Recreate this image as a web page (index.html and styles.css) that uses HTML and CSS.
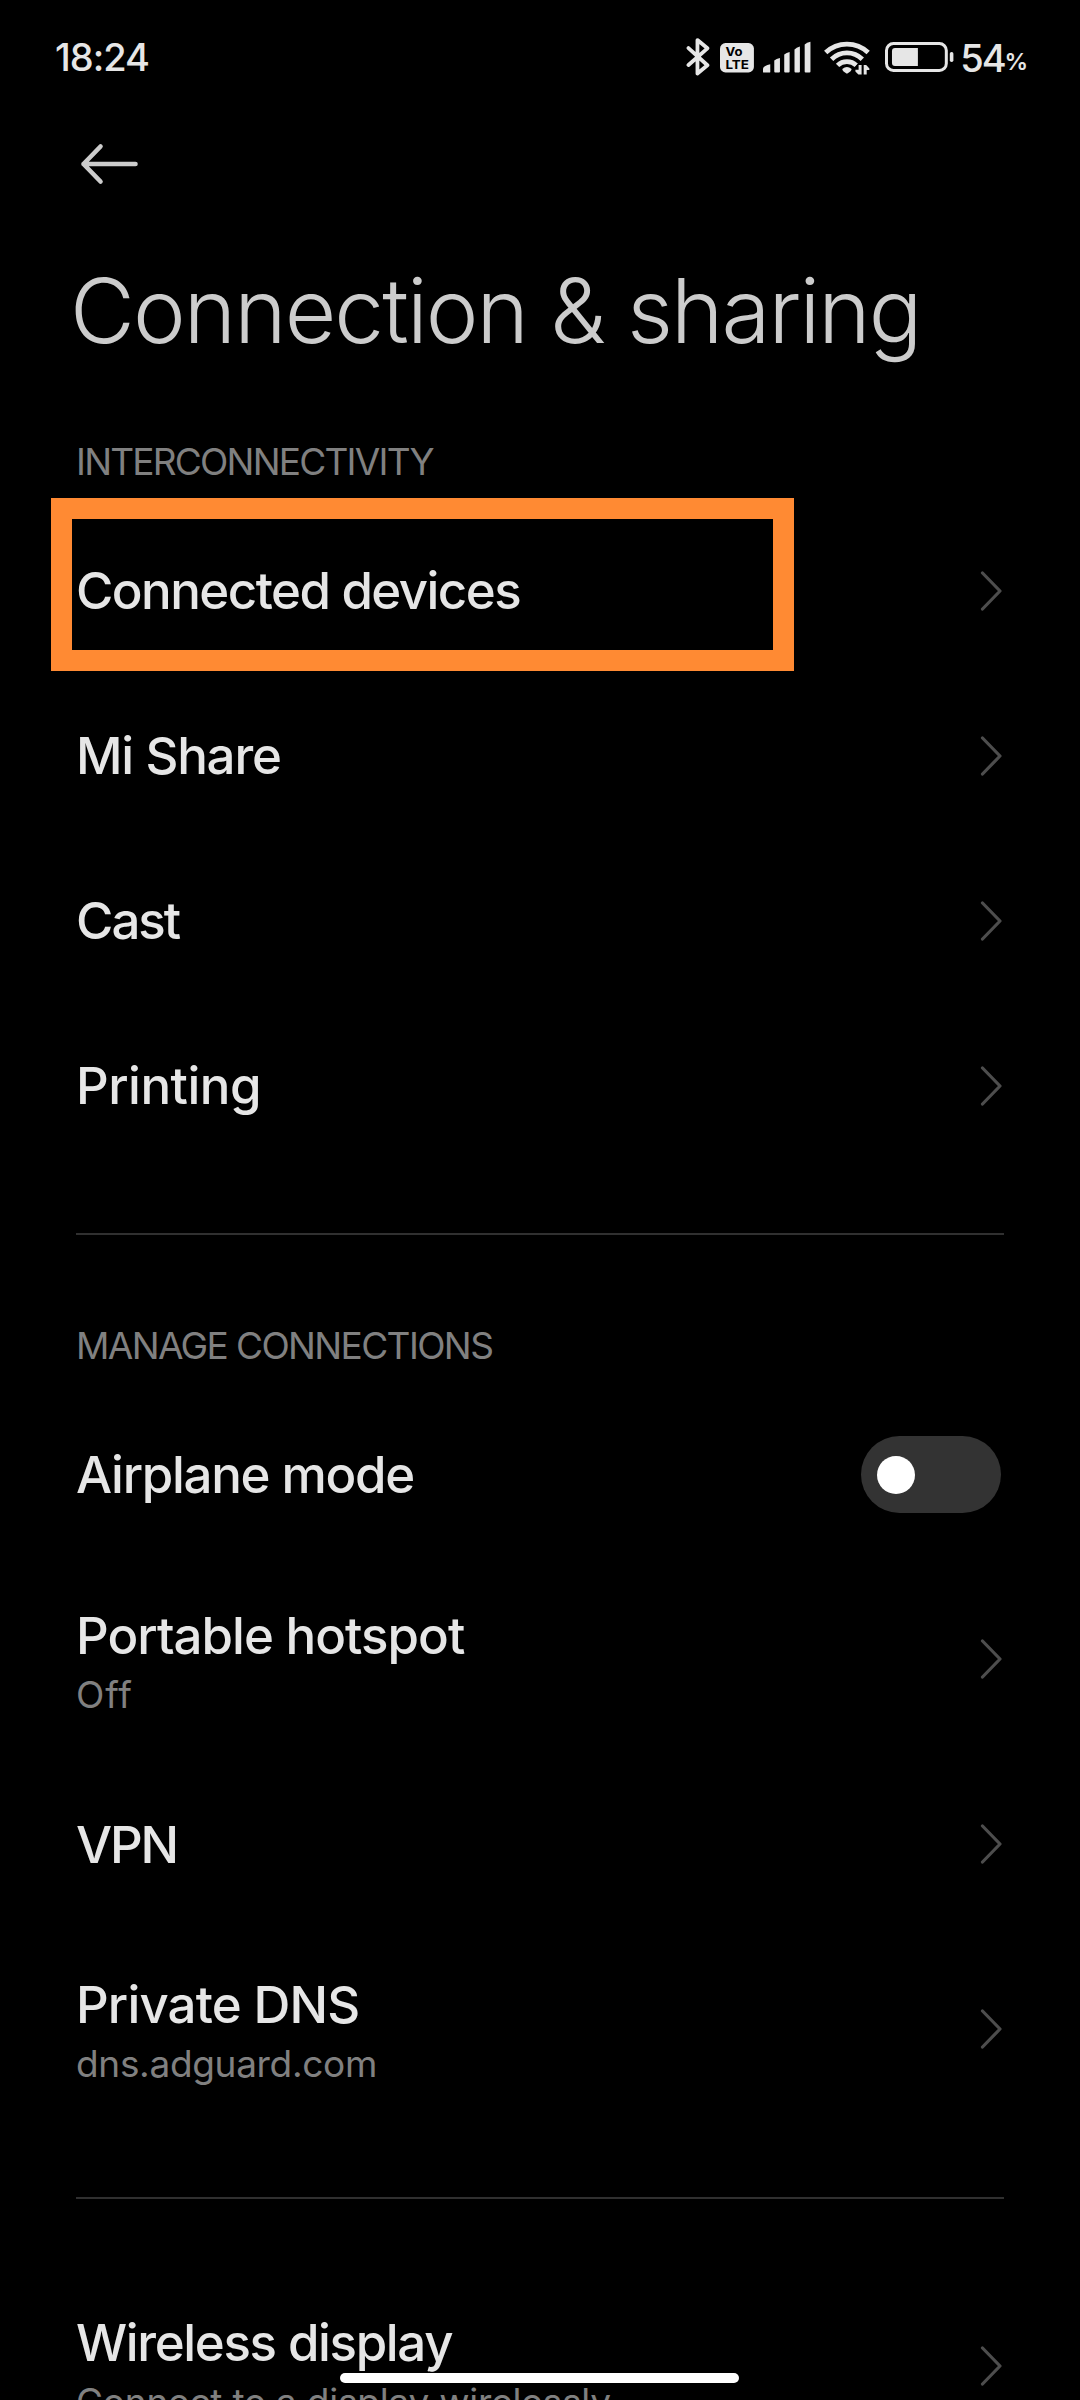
FILE: index.html
```html
<!DOCTYPE html>
<html lang="en">
<head>
<meta charset="utf-8">
<title>Connection &amp; sharing</title>
<link rel="stylesheet" href="styles.css">
</head>
<body>
<div class="screen">
  <header class="status">
    <span class="status__time">18:24</span>
    <div class="status__icons">
      <svg class="icon-bt" width="26" height="40" viewBox="0 0 26 40"><path d="M4.500 11 L23.500 28.300 L13.500 36.500 V3 L23.500 11.300 L4.500 28" fill="none" stroke="#e6e6e6" stroke-width="3.800" stroke-linejoin="round" stroke-linecap="round"/></svg>
      <svg class="icon-volte" width="34" height="30" viewBox="0 0 34 30"><rect width="34" height="29.500" rx="5.500" fill="#e6e6e6"/><text class="volte-text" x="5.500" y="13.200" textLength="17" lengthAdjust="spacingAndGlyphs">Vo</text><text class="volte-text" x="5.500" y="25.600" textLength="23.500" lengthAdjust="spacingAndGlyphs">LTE</text></svg>
      <svg class="icon-signal" width="48" height="32" viewBox="0 0 48 32"><g fill="#e6e6e6"><path d="M0 31 V27.500 Q1 24.500 7.300 23.300 V31 Q7.300 31.500 6.500 31.500 H.8 Q0 31.500 0 31Z"/><path d="M11.300 19.500 Q13.300 17.800 17 17 V30.500 Q17 31.500 16 31.500 H12.300 Q11.300 31.500 11.300 30.500Z"/><path d="M21.300 13.500 Q23.500 11.800 26.700 11 V30.500 Q26.700 31.500 25.700 31.500 H22.300 Q21.300 31.500 21.300 30.500Z"/><path d="M31.600 8.500 Q33.500 6.600 37 5.500 V30.500 Q37 31.500 36 31.500 H32.600 Q31.600 31.500 31.600 30.500Z"/><path d="M41.800 3.500 Q44 1.500 47.600 .8 V30.500 Q47.600 31.500 46.600 31.500 H42.800 Q41.800 31.500 41.800 30.500Z"/></g></svg>
      <svg class="icon-wifi" width="46" height="36" viewBox="0 0 46 36"><g fill="none" stroke="#e6e6e6" stroke-width="4.800"><path d="M1.700 12.500 A31 31 0 0 1 44.300 12.500"/><path d="M7.600 19.200 A22 22 0 0 1 38.400 19.200"/><path d="M13.600 25.400 A13.600 13.600 0 0 1 32.400 25.400"/></g><path d="M18.300 29 Q23 25 27.700 29 Q27.400 31.500 23 33.700 Q18.600 31.500 18.300 29Z" fill="#e6e6e6"/><path d="M33.500 24 H46 V36 H30.500 V28Z" fill="#000"/><path d="M37.700 25 V34.500 H34.500 L31.500 31.500 V29.800 H34.700 V25Z M39.800 34.500 V25 H42.300 L45.500 28.500 V30 H42.800 V34.500Z" fill="#e6e6e6"/></svg>
      <svg class="icon-battery" width="70" height="30" viewBox="0 0 70 30"><rect x="1.500" y="1.500" width="60" height="27" rx="7" fill="none" stroke="#e6e6e6" stroke-width="3"/><path d="M10 6 H33 V24 H10 Q7 24 7 21 V9 Q7 6 10 6Z" fill="#e6e6e6"/><rect x="65" y="10" width="3.600" height="10" rx="1.700" fill="#e6e6e6"/></svg>
      <span class="status__level">54</span><span class="status__percent">%</span>
    </div>
  </header>

  <nav class="toolbar">
    <svg width="60" height="42" viewBox="0 0 60 42"><path d="M21.500 3.500 L4.500 21 L21.500 38.500 M4.500 21 H56.500" fill="none" stroke="#ccc" stroke-width="4.600" stroke-linecap="round" stroke-linejoin="round"/></svg>
  </nav>
  <h1 class="title">Connection &amp; sharing</h1>

  <section class="group">
    <h2 class="label label--inter">INTERCONNECTIVITY</h2>
    <div class="item item--connected"><div class="item__text"><div class="item__title">Connected devices</div></div><svg class="chevron" viewBox="0 0 22 40"><path d="M2.500 2 L20 20 L2.500 38"/></svg><div class="highlight"></div></div>
    <div class="item item--share"><div class="item__text"><div class="item__title">Mi Share</div></div><svg class="chevron" viewBox="0 0 22 40"><path d="M2.500 2 L20 20 L2.500 38"/></svg></div>
    <div class="item item--cast"><div class="item__text"><div class="item__title">Cast</div></div><svg class="chevron" viewBox="0 0 22 40"><path d="M2.500 2 L20 20 L2.500 38"/></svg></div>
    <div class="item item--print"><div class="item__text"><div class="item__title">Printing</div></div><svg class="chevron" viewBox="0 0 22 40"><path d="M2.500 2 L20 20 L2.500 38"/></svg></div>
  </section>

  <section class="group group--divided">
    <h2 class="label label--manage">MANAGE CONNECTIONS</h2>
    <div class="item item--airplane"><div class="item__text"><div class="item__title">Airplane mode</div></div><div class="toggle"><div class="toggle__knob"></div></div></div>
    <div class="item item--double item--hotspot"><div class="item__text"><div class="item__title">Portable hotspot</div><div class="item__note">Off</div></div><svg class="chevron" viewBox="0 0 22 40"><path d="M2.500 2 L20 20 L2.500 38"/></svg></div>
    <div class="item item--vpn"><div class="item__text"><div class="item__title">VPN</div></div><svg class="chevron" viewBox="0 0 22 40"><path d="M2.500 2 L20 20 L2.500 38"/></svg></div>
    <div class="item item--double item--dns"><div class="item__text"><div class="item__title">Private DNS</div><div class="item__note">dns.adguard.com</div></div><svg class="chevron" viewBox="0 0 22 40"><path d="M2.500 2 L20 20 L2.500 38"/></svg></div>
  </section>

  <section class="group group--last">
    <div class="item item--double item--wireless"><div class="item__text"><div class="item__title">Wireless display</div><div class="item__note">Connect to a display wirelessly</div></div><svg class="chevron" viewBox="0 0 22 40"><path d="M2.500 2 L20 20 L2.500 38"/></svg></div>
  </section>
  <div class="home-bar"></div>
</div>
</body>
</html>
```
FILE: styles.css
```css
* { box-sizing: border-box; }

html,
body {
  margin: 0;
  background: #000;
}

.screen {
  position: relative;
  width: 1080px;
  height: 2400px;
  overflow: hidden;
  background: #000;
  color: #e6e6e6;
  font-family: Inter, "Noto Sans", sans-serif;
}

/* Status bar */
.status {
  display: flex;
  justify-content: space-between;
  align-items: center;
  height: 114px;
  padding: 0 53px 0 55px;
  font-weight: 500;
  font-size: 38px;
  line-height: 46px;
}

.status__time { letter-spacing: -1px; }

.status__icons {
  display: flex;
  align-items: center;
  width: 343px;
}

.icon-bt { margin: 0 10px 1px 0; }
.icon-volte { margin: 1px 9px 0 0; }
.icon-signal { margin: 0 13px 0 0; }
.icon-wifi { margin: 1px 15px 0 0; }
.icon-battery { margin-right: 6px; }

.volte-text {
  font: 700 12px Inter, sans-serif;
  fill: #000;
}

.status__level {
  padding-top: 1px;
  font-size: 38px;
  letter-spacing: -2.2px;
}

.status__percent {
  padding-top: 10px;
  font-size: 23.5px;
  font-weight: 600;
  letter-spacing: -1px;
}

/* Heading */
.toolbar {
  display: flex;
  align-items: center;
  height: 100px;
  padding-left: 79px;
}

.title {
  margin: 0;
  padding: 47px 0 0 70px;
  height: 217px;
  font-weight: 300;
  font-size: 89px;
  line-height: 100px;
  letter-spacing: -1.9px;
  color: #ccc;
}

/* Setting groups */
.group { margin: 0 76px; }

.label {
  display: flex;
  align-items: center;
  height: 77px;
  margin: 0;
  padding-bottom: 16px;
  font-weight: 400;
  font-size: 37px;
  line-height: 45px;
  color: #808080;
}

.label--inter { letter-spacing: -1.78px; }
.label--manage { letter-spacing: -1.62px; }

.group--divided {
  margin-top: 65px;
  border-top: 2px solid #303030;
  border-bottom: 2px solid #303030;
  padding: 80px 0 66px;
}

.group--last { padding-top: 65px; }

.item {
  position: relative;
  display: flex;
  justify-content: space-between;
  align-items: center;
  height: 165px;
}

.item__title {
  font-weight: 500;
  font-size: 51px;
  line-height: 62px;
  white-space: nowrap;
}

.item__note {
  font-size: 37px;
  line-height: 55px;
  color: #808080;
  white-space: nowrap;
}

.item--double { height: 204.5px; }
.item--double .item__text { padding-top: 8px; }
.item--vpn .item__text { padding-top: 2px; }

.item--connected .item__title { letter-spacing: -1.55px; }
.item--share .item__title { letter-spacing: -1.2px; }
.item--cast .item__title { letter-spacing: -2px; }
.item--print .item__title { letter-spacing: -0.5px; }
.item--airplane .item__title { letter-spacing: -1.29px; }
.item--hotspot .item__title { letter-spacing: -0.97px; }
.item--vpn .item__title { letter-spacing: -2.19px; }
.item--dns .item__title { letter-spacing: -0.85px; }
.item--wireless .item__title { letter-spacing: -1.35px; }
.item--hotspot .item__note { letter-spacing: 0.9px; }
.item--dns .item__note { letter-spacing: -0.32px; }
.item--wireless .item__note { letter-spacing: -0.22px; }

.chevron {
  width: 22px;
  height: 40px;
  margin: 0 2px 0 0;
  fill: none;
  stroke: #4d4d4d;
  stroke-width: 3.2;
  stroke-linecap: round;
  stroke-linejoin: round;
}

.toggle {
  display: flex;
  align-items: center;
  width: 140px;
  height: 77px;
  margin-right: 3px;
  padding-left: 16px;
  border-radius: 39px;
  background: #333;
}

.toggle__knob {
  width: 38px;
  height: 38px;
  border-radius: 50%;
  background: #fff;
}

/* Marker drawn around the first row */
.highlight {
  position: absolute;
  left: -25px;
  top: -10px;
  width: 743px;
  height: 173px;
  border: 21px solid #ff8a33;
}

.home-bar {
  position: absolute;
  left: 340px;
  top: 2373px;
  width: 399px;
  height: 10px;
  border-radius: 5px;
  background: #fff;
}
```
